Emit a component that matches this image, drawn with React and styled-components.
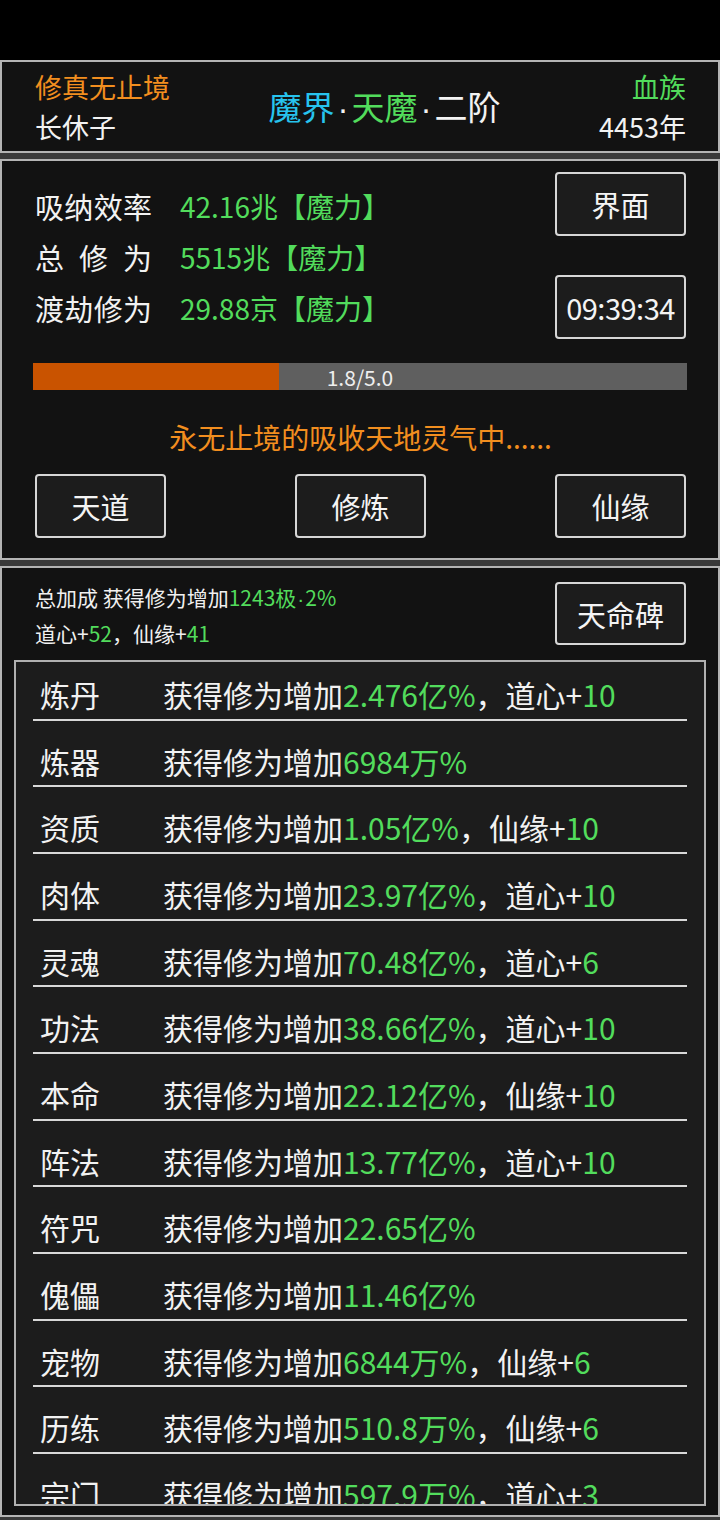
import React from "react";
import styled, { createGlobalStyle } from "styled-components";

const GlobalStyle = createGlobalStyle`
  html, body {
    margin: 0;
    padding: 0;
    background: #000;
  }
  body {
    font-family: "Noto Sans CJK SC", "Noto Sans", sans-serif;
    color: #f0f0f0;
  }
  * {
    box-sizing: border-box;
  }
`;

const GREEN = "#52dc5c";
const ORANGE = "#f28e1f";
const BLUE = "#27c3ee";

const stats = [
  { label: "吸纳效率", value: "42.16兆【魔力】" },
  { label: "总 修 为", value: "5515兆【魔力】" },
  { label: "渡劫修为", value: "29.88京【魔力】" },
];

// each part: [text, green?]
const bonuses = [
  ["炼丹", [["获得修为增加"], ["2.476亿%", 1], ["，道心+"], ["10", 1]]],
  ["炼器", [["获得修为增加"], ["6984万%", 1]]],
  ["资质", [["获得修为增加"], ["1.05亿%", 1], ["，仙缘+"], ["10", 1]]],
  ["肉体", [["获得修为增加"], ["23.97亿%", 1], ["，道心+"], ["10", 1]]],
  ["灵魂", [["获得修为增加"], ["70.48亿%", 1], ["，道心+"], ["6", 1]]],
  ["功法", [["获得修为增加"], ["38.66亿%", 1], ["，道心+"], ["10", 1]]],
  ["本命", [["获得修为增加"], ["22.12亿%", 1], ["，仙缘+"], ["10", 1]]],
  ["阵法", [["获得修为增加"], ["13.77亿%", 1], ["，道心+"], ["10", 1]]],
  ["符咒", [["获得修为增加"], ["22.65亿%", 1]]],
  ["傀儡", [["获得修为增加"], ["11.46亿%", 1]]],
  ["宠物", [["获得修为增加"], ["6844万%", 1], ["，仙缘+"], ["6", 1]]],
  ["历练", [["获得修为增加"], ["510.8万%", 1], ["，仙缘+"], ["6", 1]]],
  ["宗门", [["获得修为增加"], ["597.9万%", 1], ["，道心+"], ["3", 1]]],
];

const progress = { current: 1.8, max: 5.0 };

const Page = styled.div`
  width: 720px;
`;

const StatusBar = styled.div`
  height: 60px;
  background: #000;
`;

const Main = styled.main`
  display: flex;
  flex-direction: column;
  gap: 6px;
  background: #3a3a3a;
  padding-bottom: 3px;
`;

const Panel = styled.section`
  background: #121212;
  border: 2px solid #b4b4b4;
  padding: ${(p) => p.$pad || "0 32px 0 33px"};
`;

const HeaderRow = styled.div`
  display: flex;
  justify-content: space-between;
  align-items: center;
  padding: 5px 0 4px;
`;

const Col = styled.div`
  display: flex;
  flex-direction: column;
  align-items: ${(p) => (p.$right ? "flex-end" : "flex-start")};
`;

const Line = styled.div`
  font-size: ${(p) => p.$size || 27}px;
  line-height: 40px;
  color: ${(p) => p.$color || "#f2f2f2"};
  white-space: nowrap;
`;

const Realm = styled.div`
  font-size: 33px;
  line-height: 40px;
  white-space: nowrap;
`;

const Tint = styled.span`
  color: ${(p) => p.$color};
`;

const Dot = styled.span`
  font-family: "Liberation Sans", sans-serif;
  color: ${(p) => p.$color || "#f2f2f2"};
  margin: 0 ${(p) => p.$gap || 0}px;
`;

const TopSection = styled.div`
  display: flex;
  justify-content: space-between;
  padding-top: 11px;
`;

const StatList = styled.div`
  margin-top: 8px;
`;

const StatRow = styled.div`
  display: flex;
  align-items: center;
  height: 51px;
  font-size: 29px;
  white-space: nowrap;
`;

const StatLabel = styled.span`
  width: 117px;
  text-align: justify;
  text-align-last: justify;
  color: #f2f2f2;
`;

const StatValue = styled.span`
  margin-left: 28px;
  color: ${GREEN};
  font-size: 28px;
`;

const ButtonCol = styled.div`
  display: flex;
  flex-direction: column;
  gap: 39px;
`;

const Button = styled.button`
  width: 131px;
  height: ${(p) => p.$h || 64}px;
  background: #1c1c1c;
  border: 2px solid #d6d6d6;
  border-radius: 4px;
  color: #f4f4f4;
  font-family: inherit;
  font-size: ${(p) => p.$size || 29}px;
  padding: 0;
  white-space: nowrap;
  letter-spacing: ${(p) => (p.$tight ? "-0.5px" : "0")};
`;

const Bar = styled.div`
  position: relative;
  height: 27px;
  margin: 24px -1px 0 -2px;
  background: #5f5f5f;
`;

const BarFill = styled.div`
  height: 100%;
  background: #c95300;
`;

const BarText = styled.span`
  position: absolute;
  inset: 0;
  display: flex;
  align-items: center;
  justify-content: center;
  font-size: 21px;
  color: #eeeeee;
`;

const Message = styled.div`
  margin-top: 27px;
  text-align: center;
  font-size: 28px;
  line-height: 40px;
  color: ${ORANGE};
`;

const ActionRow = styled.div`
  display: flex;
  justify-content: space-between;
  margin-top: 17px;
  padding-bottom: 20px;
`;

const BonusHead = styled.div`
  display: flex;
  justify-content: space-between;
  padding: 12px 20px 0 21px;
  height: 92px;
`;

const BonusText = styled.div`
  font-size: 21px;
  line-height: 34px;
  color: #f0f0f0;
  white-space: nowrap;
`;

const HeadButton = styled(Button)`
  margin-top: 2px;
`;

const ListBox = styled.div`
  height: 846px;
  margin-bottom: 9px;
  background: #1c1c1c;
  border: 2px solid #b0b0b0;
  overflow: hidden;
`;

const ListScroll = styled.div`
  margin-top: -8px;
`;

const ItemRow = styled.div`
  display: flex;
  height: 66.67px;
  margin: 0 17px;
  padding: 22px 0 0 7px;
  border-bottom: 2px solid #d8d8d8;
  font-size: 30px;
  line-height: 36px;
  white-space: nowrap;
`;

const ItemLabel = styled.span`
  width: 123px;
  color: #f2f2f2;
`;

const ItemValue = styled.span`
  color: #f2f2f2;
`;

function Parts({ parts }) {
  return parts.map(([text, green], i) =>
    green ? (
      <Tint key={i} $color={GREEN}>
        {text}
      </Tint>
    ) : (
      <React.Fragment key={i}>{text}</React.Fragment>
    )
  );
}

export default function App() {
  const pct = (progress.current / progress.max) * 100 + 1.6;
  return (
    <Page>
      <GlobalStyle />
      <StatusBar />
      <Main>
        <Panel>
          <HeaderRow>
            <Col>
              <Line $color={ORANGE}>修真无止境</Line>
              <Line>长休子</Line>
            </Col>
            <Realm>
              <Tint $color={BLUE}>魔界</Tint>
              <Dot $gap={3}>·</Dot>
              <Tint $color={GREEN}>天魔</Tint>
              <Dot $gap={3}>·</Dot>
              <Tint $color="#f2f2f2">二阶</Tint>
            </Realm>
            <Col $right>
              <Line $color={GREEN}>血族</Line>
              <Line>4453年</Line>
            </Col>
          </HeaderRow>
        </Panel>

        <Panel>
          <TopSection>
            <StatList>
              {stats.map((s) => (
                <StatRow key={s.label}>
                  <StatLabel>{s.label}</StatLabel>
                  <StatValue>{s.value}</StatValue>
                </StatRow>
              ))}
            </StatList>
            <ButtonCol>
              <Button>界面</Button>
              <Button $tight>09:39:34</Button>
            </ButtonCol>
          </TopSection>
          <Bar>
            <BarFill style={{ width: `${pct}%` }} />
            <BarText>
              {progress.current.toFixed(1)}/{progress.max.toFixed(1)}
            </BarText>
          </Bar>
          <Message>永无止境的吸收天地灵气中......</Message>
          <ActionRow>
            <Button>天道</Button>
            <Button>修炼</Button>
            <Button>仙缘</Button>
          </ActionRow>
        </Panel>

        <Panel $pad="0 12px">
          <BonusHead>
            <div>
              <BonusText>
                总加成 获得修为增加
                <Tint $color={GREEN}>
                  1243极<Dot $color={GREEN} $gap={1}>·</Dot>2%
                </Tint>
              </BonusText>
              <BonusText>
                道心+<Tint $color={GREEN}>52</Tint>，仙缘+
                <Tint $color={GREEN}>41</Tint>
              </BonusText>
            </div>
            <HeadButton $h={63}>天命碑</HeadButton>
          </BonusHead>
          <ListBox>
            <ListScroll>
              {bonuses.map(([label, parts]) => (
                <ItemRow key={label}>
                  <ItemLabel>{label}</ItemLabel>
                  <ItemValue>
                    <Parts parts={parts} />
                  </ItemValue>
                </ItemRow>
              ))}
            </ListScroll>
          </ListBox>
        </Panel>
      </Main>
    </Page>
  );
}
